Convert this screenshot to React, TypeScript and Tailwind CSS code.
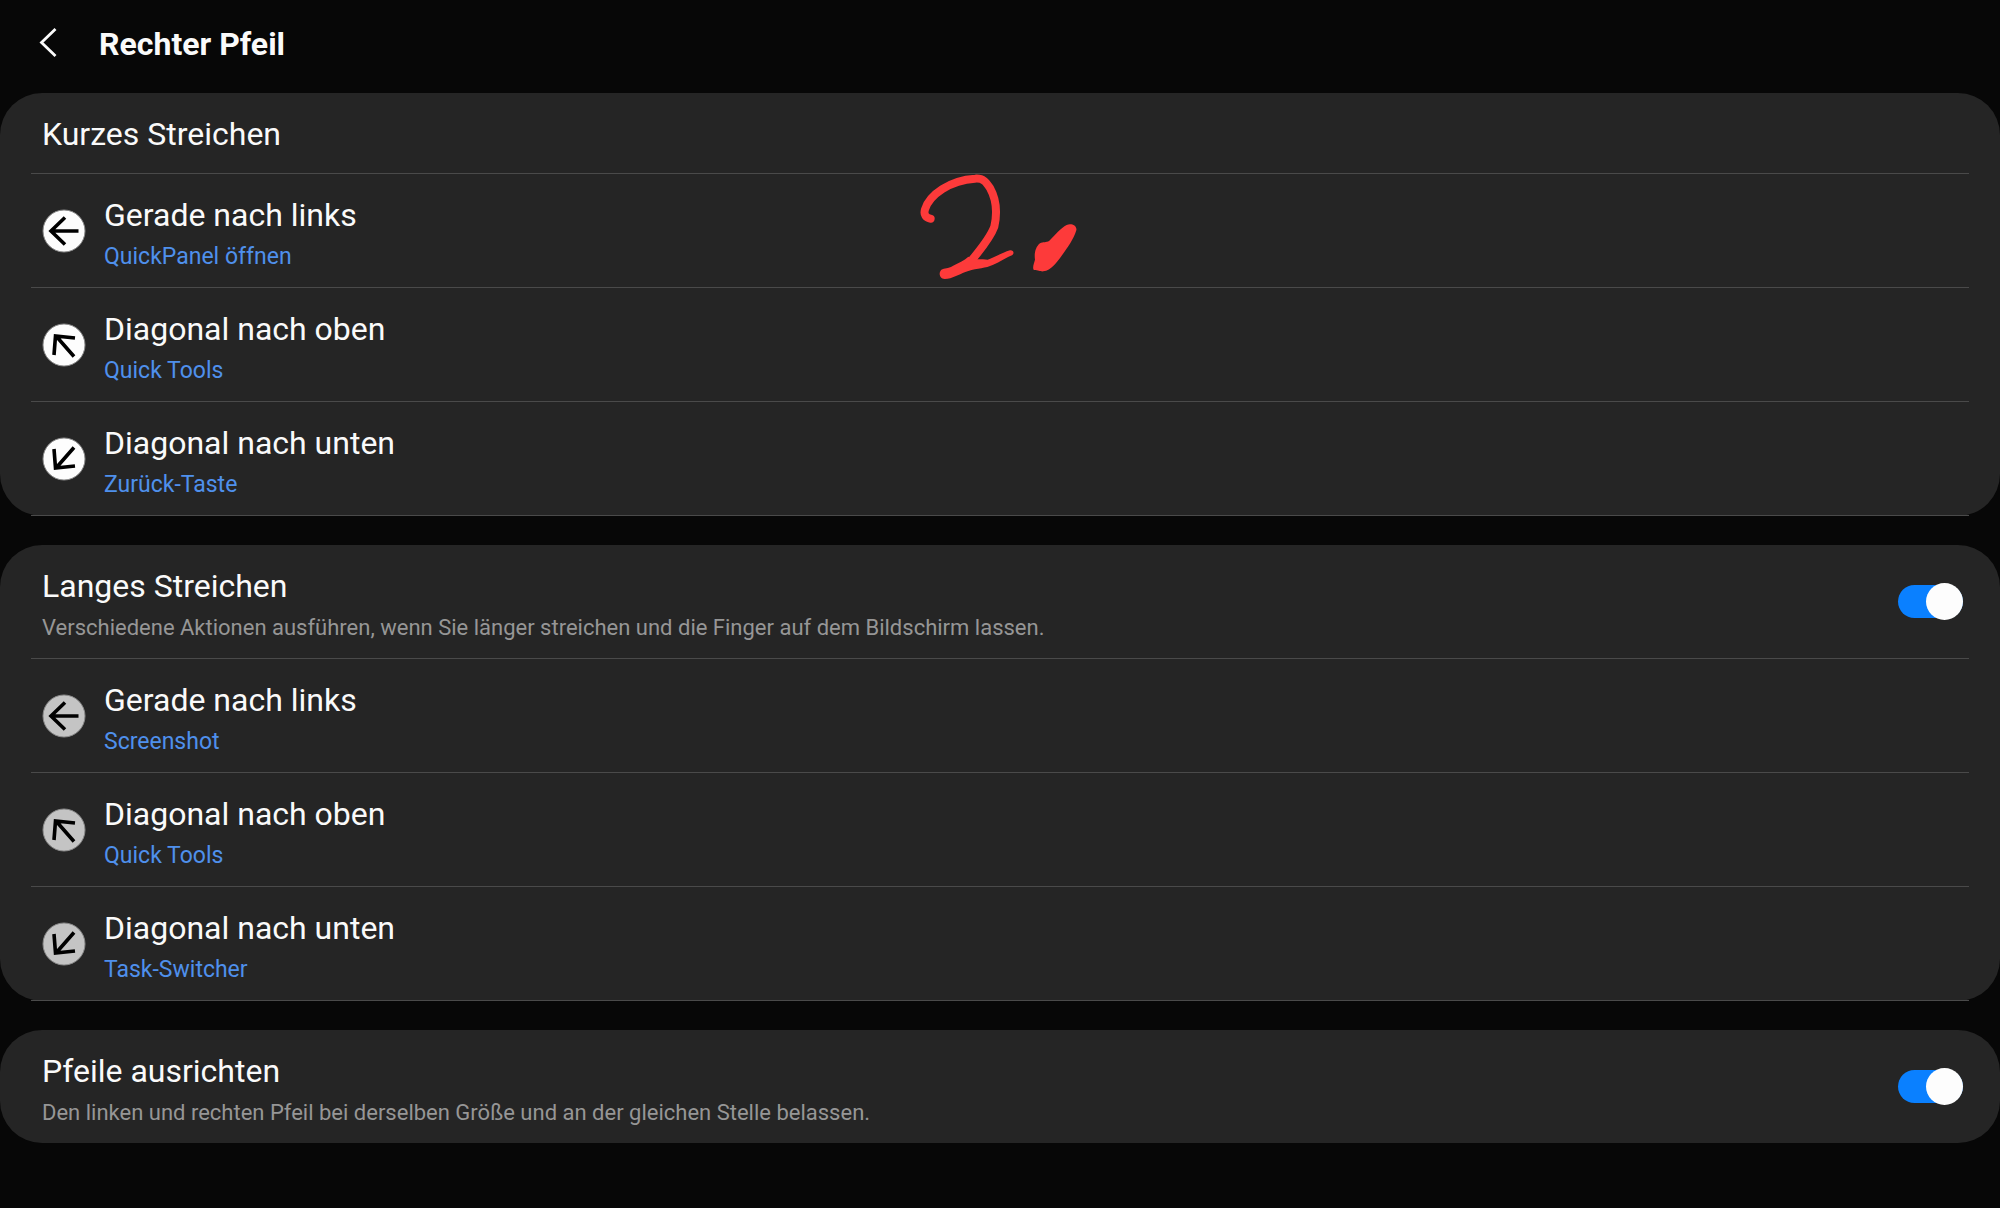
import { useState } from "react";
import type { ReactNode } from "react";

type Direction = "left" | "up" | "down";

type Gesture = {
  direction: Direction;
  title: string;
  action: string;
};

const SHORT_SWIPES: Gesture[] = [
  { direction: "left", title: "Gerade nach links", action: "QuickPanel öffnen" },
  { direction: "up", title: "Diagonal nach oben", action: "Quick Tools" },
  { direction: "down", title: "Diagonal nach unten", action: "Zurück-Taste" },
];

const LONG_SWIPES: Gesture[] = [
  { direction: "left", title: "Gerade nach links", action: "Screenshot" },
  { direction: "up", title: "Diagonal nach oben", action: "Quick Tools" },
  { direction: "down", title: "Diagonal nach unten", action: "Task-Switcher" },
];

const ARROW_PATHS: Record<Direction, string> = {
  left: "M36.5 22H9M23 8.5L9 22L23 35.5",
  up: "M32 33.500L14 13M33 15L13.500 13L12 32",
  down: "M32 10.500L14 31M12 12L13.500 31L33 29",
};

function ArrowBadge({ direction, dimmed }: { direction: Direction; dimmed?: boolean }) {
  return (
    <svg viewBox="0 0 44 44" className="size-11 shrink-0" fill="none" aria-hidden="true">
      <circle cx="22" cy="22" r="21" fill={dimmed ? "#c4c4c4" : "#fdfdfd"} stroke="#8a8a8a" strokeWidth="1" />
      <path d={ARROW_PATHS[direction]} stroke="#000" strokeWidth="3.6" />
    </svg>
  );
}

function Card({ children }: { children: ReactNode }) {
  return <section className="relative rounded-[42px] bg-[#252525] px-[31px]">{children}</section>;
}

function GestureRow({ gesture, dimmed }: { gesture: Gesture; dimmed?: boolean }) {
  return (
    <li className="border-b border-[#4a4a4a]">
      <button type="button" className="flex w-full items-center gap-[18px] px-[11px] text-left">
        <ArrowBadge direction={gesture.direction} dimmed={dimmed} />
        <span className="flex flex-col gap-2 pt-[21px] pb-4">
          <span className="text-[32px] leading-10">{gesture.title}</span>
          <span className="text-[23px] leading-7 text-[#4f90ec]">{gesture.action}</span>
        </span>
      </button>
    </li>
  );
}

type SwitchRowProps = {
  id: string;
  title: string;
  description: string;
  checked: boolean;
  onChange: (checked: boolean) => void;
};

function SwitchRow({ id, title, description, checked, onChange }: SwitchRowProps) {
  return (
    <div className="flex items-center justify-between gap-8 pr-1.5 pl-[11px]">
      <label htmlFor={id} className="flex flex-col gap-2 pt-[21px] pb-4">
        <span className="text-[32px] leading-10">{title}</span>
        <span className="text-[22px] leading-7 text-[#969696]">{description}</span>
      </label>
      <input
        id={id}
        type="checkbox"
        role="switch"
        checked={checked}
        onChange={(e) => onChange(e.target.checked)}
        className="flex h-[33px] w-[65px] shrink-0 appearance-none items-center rounded-full bg-[#5c5c5c] before:size-[37px] before:shrink-0 before:rounded-full before:bg-[#fdfdfd] checked:justify-end checked:bg-[#0a80ff]"
      />
    </div>
  );
}

// Handwritten "2." drawn across the first row
function StepMark() {
  return (
    <svg
      viewBox="0 0 600 390"
      className="pointer-events-none absolute top-[67px] left-[45%] h-[130px] w-[200px]"
      fill="none"
      aria-hidden="true"
    >
      <path
        d="M92 176C78 174 70 164 75 148C88 105 150 60 225 56C250 54 258 66 270 84C290 120 292 160 283 200C270 236 240 270 214 302"
        stroke="#fd3a3a"
        strokeWidth="24"
        strokeLinecap="round"
        strokeLinejoin="round"
      />
      <path
        d="M205 290C222 300 245 296 263 299C285 292 310 276 330 271C341 270 344 281 336 286C312 295 292 312 270 318C250 326 220 326 196 336C175 344 158 356 134 357C118 356 115 338 124 329C134 324 144 327 158 318C176 308 192 302 205 290Z"
        fill="#fd3a3a"
      />
      <path
        d="M500 195C514 189 532 197 529 211C520 239 504 261 485 287C469 309 454 330 430 334C420 335 416 330 402 330C396 325 402 310 405 299C402 280 407 260 420 250C430 244 438 249 448 242C466 225 482 204 500 195Z"
        fill="#fd3a3a"
      />
    </svg>
  );
}

export default function App() {
  const [longSwipe, setLongSwipe] = useState(true);
  const [alignHandles, setAlignHandles] = useState(true);

  return (
    <div className="min-h-screen bg-[#070707] font-['Roboto',sans-serif] text-[#fafafa]">
      <header className="flex h-[93px] items-center gap-[31px] pb-[5px] pl-7">
        <button type="button" aria-label="Zurück" className="flex size-10 items-center justify-center">
          <svg viewBox="0 0 40 40" className="size-10" fill="none" aria-hidden="true">
            <path d="M27.500 5L13.500 18.500L27.500 32" stroke="#fafafa" strokeWidth="2.800" />
          </svg>
        </button>
        <h1 className="text-[32px] leading-10 font-bold">Rechter Pfeil</h1>
      </header>

      <main className="flex flex-col gap-[29px]">
        <Card>
          <h2 className="border-b border-[#4a4a4a] px-[11px] pt-[21px] pb-[19px] text-[32px] leading-10 font-normal">
            Kurzes Streichen
          </h2>
          <ul>
            {SHORT_SWIPES.map((g) => (
              <GestureRow key={g.direction} gesture={g} />
            ))}
          </ul>
          <StepMark />
        </Card>

        <Card>
          <div className="border-b border-[#4a4a4a]">
            <SwitchRow
              id="long-swipe"
              title="Langes Streichen"
              description="Verschiedene Aktionen ausführen, wenn Sie länger streichen und die Finger auf dem Bildschirm lassen."
              checked={longSwipe}
              onChange={setLongSwipe}
            />
          </div>
          <ul>
            {LONG_SWIPES.map((g) => (
              <GestureRow key={g.direction} gesture={g} dimmed />
            ))}
          </ul>
        </Card>

        <Card>
          <SwitchRow
            id="align-handles"
            title="Pfeile ausrichten"
            description="Den linken und rechten Pfeil bei derselben Größe und an der gleichen Stelle belassen."
            checked={alignHandles}
            onChange={setAlignHandles}
          />
        </Card>
      </main>
    </div>
  );
}
